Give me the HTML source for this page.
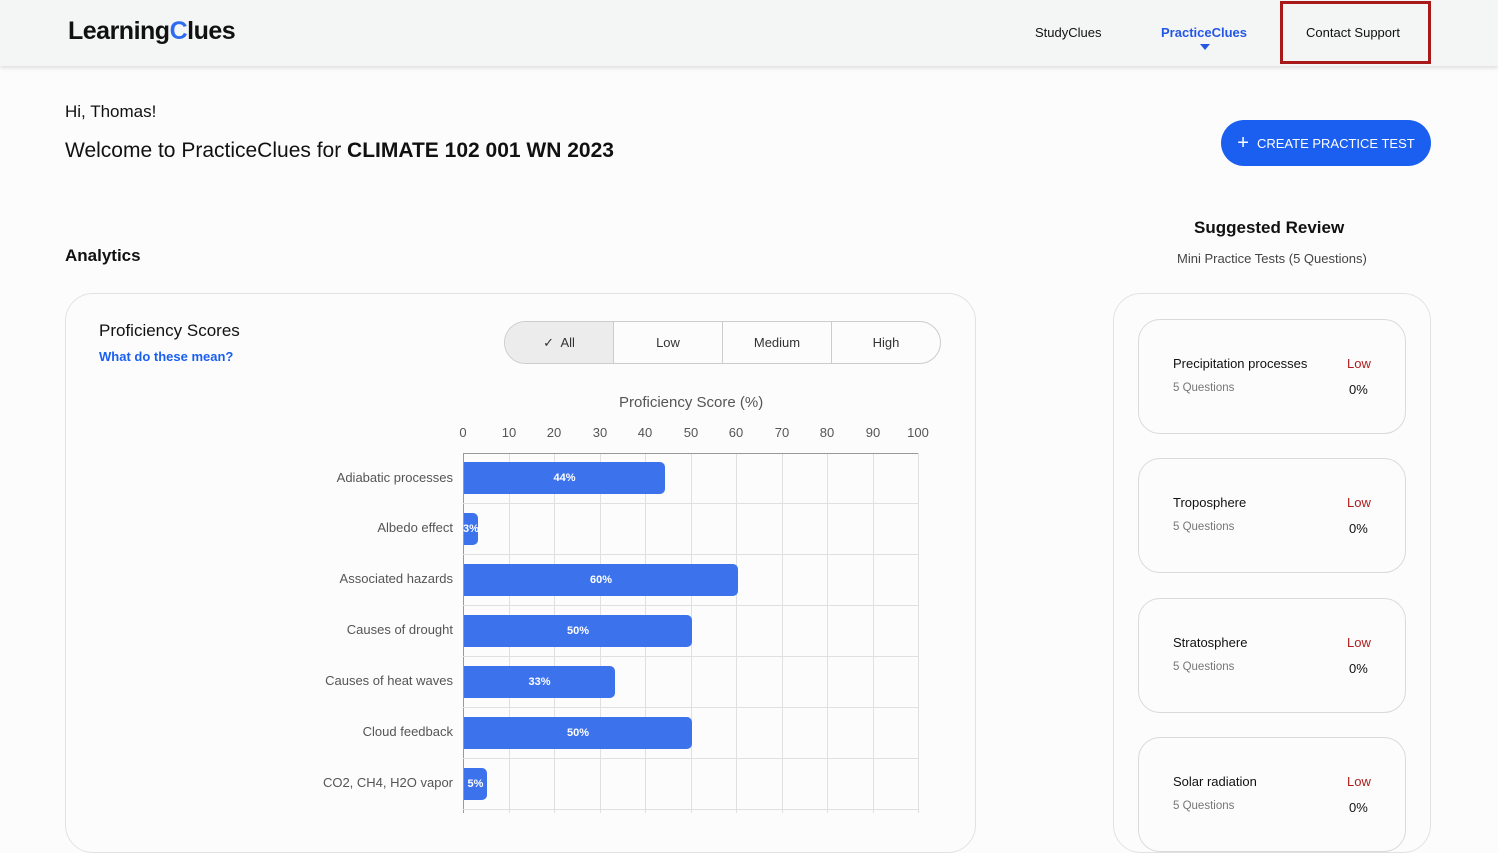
<!DOCTYPE html>
<html><head><meta charset="utf-8"><style>
*{box-sizing:border-box;margin:0;padding:0}
body{width:1498px;height:812px;overflow:hidden;background:#fcfcfc;font-family:"Liberation Sans",sans-serif;color:#111;position:relative}
.a{position:absolute}
.hdr{left:0;top:0;width:1498px;height:66px;background:#f4f5f5;box-shadow:0 2px 4px rgba(0,0,0,.12)}
.nav{font-size:13px;top:25px}
.card{border:1px solid #e2e2e2;border-radius:28px;background:#fcfcfc}
.seg{top:321px;height:43px;width:437px;left:504px;border:1px solid #ccc;border-radius:22px;display:flex;overflow:hidden;font-size:13px;color:#333}
.seg div{flex:1;display:flex;align-items:center;justify-content:center;border-left:1px solid #ccc}
.seg div:first-child{border-left:none;background:#ececec}
.vl{top:453px;width:1px;height:360px;background:#e0e0e0}
.hl{left:463px;width:455px;height:1px;background:#e0e0e0}
.tk{top:425px;font-size:13px;color:#555;width:30px;text-align:center}
.lab{right:1045px;font-size:13px;color:#555;text-align:right;white-space:nowrap}
.bar{left:464px;height:32px;background:#3d72ed;border-radius:0 5px 5px 0;color:#fff;font-weight:bold;font-size:11px;display:flex;align-items:center;justify-content:center}
.sc{left:1138px;width:268px;height:115px;border:1px solid #dadada;border-radius:22px;background:#fcfcfc}
.sc .t{position:absolute;left:34px;top:36px;font-size:13px}
.sc .q{position:absolute;left:34px;top:62px;font-size:11.5px;color:#777}
.sc .l{position:absolute;left:208px;top:36px;font-size:13px;color:#b01d1d}
.sc .p{position:absolute;left:210px;top:62px;font-size:13px}
</style></head><body>
<div class="a hdr"></div>
<div class="a" style="left:68px;top:17px;font-size:25px;font-weight:bold;letter-spacing:-0.5px">Learning<span style="color:#2f6bf0">C</span>lues</div>
<div class="a nav" style="left:1035px">StudyClues</div>
<div class="a nav" style="left:1161px;color:#2457e6;font-weight:bold">PracticeClues</div>
<div class="a" style="left:1200px;top:44px;width:0;height:0;border-left:5px solid transparent;border-right:5px solid transparent;border-top:6px solid #2457e6"></div>
<div class="a" style="left:1280px;top:1px;width:151px;height:63px;border:3px solid #a8191a"></div>
<div class="a nav" style="left:1306px">Contact Support</div>

<div class="a" style="left:65px;top:102px;font-size:17px">Hi, Thomas!</div>
<div class="a" style="left:65px;top:139px;font-size:21px">Welcome to PracticeClues for <b>CLIMATE 102 001 WN 2023</b></div>
<div class="a" style="left:1221px;top:120px;width:210px;height:46px;border-radius:23px;background:#1a5ff0;color:#fff;font-size:13px;display:flex;align-items:center;justify-content:center"><span style="font-size:20px;margin-right:8px;font-weight:300">+</span>CREATE PRACTICE TEST</div>

<div class="a" style="left:65px;top:246px;font-size:17px;font-weight:bold">Analytics</div>
<div class="a" style="left:1194px;top:218px;font-size:17px;font-weight:bold">Suggested Review</div>
<div class="a" style="left:1177px;top:251px;font-size:13px;color:#444">Mini Practice Tests (5 Questions)</div>

<div class="a card" style="left:65px;top:293px;width:911px;height:560px"></div>
<div class="a card" style="left:1113px;top:293px;width:318px;height:560px"></div>

<div class="a" style="left:99px;top:321px;font-size:17px">Proficiency Scores</div>
<div class="a" style="left:99px;top:349px;font-size:13px;color:#1a5ff0;font-weight:bold">What do these mean?</div>
<div class="a seg"><div>✓&nbsp; All</div><div>Low</div><div>Medium</div><div>High</div></div>
<div class="a" style="left:619px;top:394px;font-size:15px;color:#555">Proficiency Score (%)</div>

<div class="a vl" style="left:463px;background:#999"></div>
<div class="a vl" style="left:509px"></div><div class="a vl" style="left:554px"></div><div class="a vl" style="left:600px"></div><div class="a vl" style="left:645px"></div><div class="a vl" style="left:691px"></div><div class="a vl" style="left:736px"></div><div class="a vl" style="left:782px"></div><div class="a vl" style="left:827px"></div><div class="a vl" style="left:873px"></div><div class="a vl" style="left:918px"></div>
<div class="a hl" style="top:453px;background:#999"></div><div class="a hl" style="top:503px"></div><div class="a hl" style="top:554px"></div><div class="a hl" style="top:605px"></div><div class="a hl" style="top:656px"></div><div class="a hl" style="top:707px"></div><div class="a hl" style="top:758px"></div><div class="a hl" style="top:809px"></div>

<div class="a tk" style="left:448px">0</div><div class="a tk" style="left:494px">10</div><div class="a tk" style="left:539px">20</div><div class="a tk" style="left:585px">30</div><div class="a tk" style="left:630px">40</div><div class="a tk" style="left:676px">50</div><div class="a tk" style="left:721px">60</div><div class="a tk" style="left:767px">70</div><div class="a tk" style="left:812px">80</div><div class="a tk" style="left:858px">90</div><div class="a tk" style="left:903px">100</div>

<div class="a lab" style="top:470px">Adiabatic processes</div>
<div class="a lab" style="top:520px">Albedo effect</div>
<div class="a lab" style="top:571px">Associated hazards</div>
<div class="a lab" style="top:622px">Causes of drought</div>
<div class="a lab" style="top:673px">Causes of heat waves</div>
<div class="a lab" style="top:724px">Cloud feedback</div>
<div class="a lab" style="top:775px">CO2, CH4, H2O vapor</div>

<div class="a bar" style="top:462px;width:201px">44%</div>
<div class="a bar" style="top:513px;width:14px">3%</div>
<div class="a bar" style="top:564px;width:274px">60%</div>
<div class="a bar" style="top:615px;width:228px">50%</div>
<div class="a bar" style="top:666px;width:151px">33%</div>
<div class="a bar" style="top:717px;width:228px">50%</div>
<div class="a bar" style="top:768px;width:23px">5%</div>

<div class="a sc" style="top:319px"><div class="t">Precipitation processes</div><div class="q">5 Questions</div><div class="l">Low</div><div class="p">0%</div></div>
<div class="a sc" style="top:458px"><div class="t">Troposphere</div><div class="q">5 Questions</div><div class="l">Low</div><div class="p">0%</div></div>
<div class="a sc" style="top:598px"><div class="t">Stratosphere</div><div class="q">5 Questions</div><div class="l">Low</div><div class="p">0%</div></div>
<div class="a sc" style="top:737px"><div class="t">Solar radiation</div><div class="q">5 Questions</div><div class="l">Low</div><div class="p">0%</div></div>
</body></html>
